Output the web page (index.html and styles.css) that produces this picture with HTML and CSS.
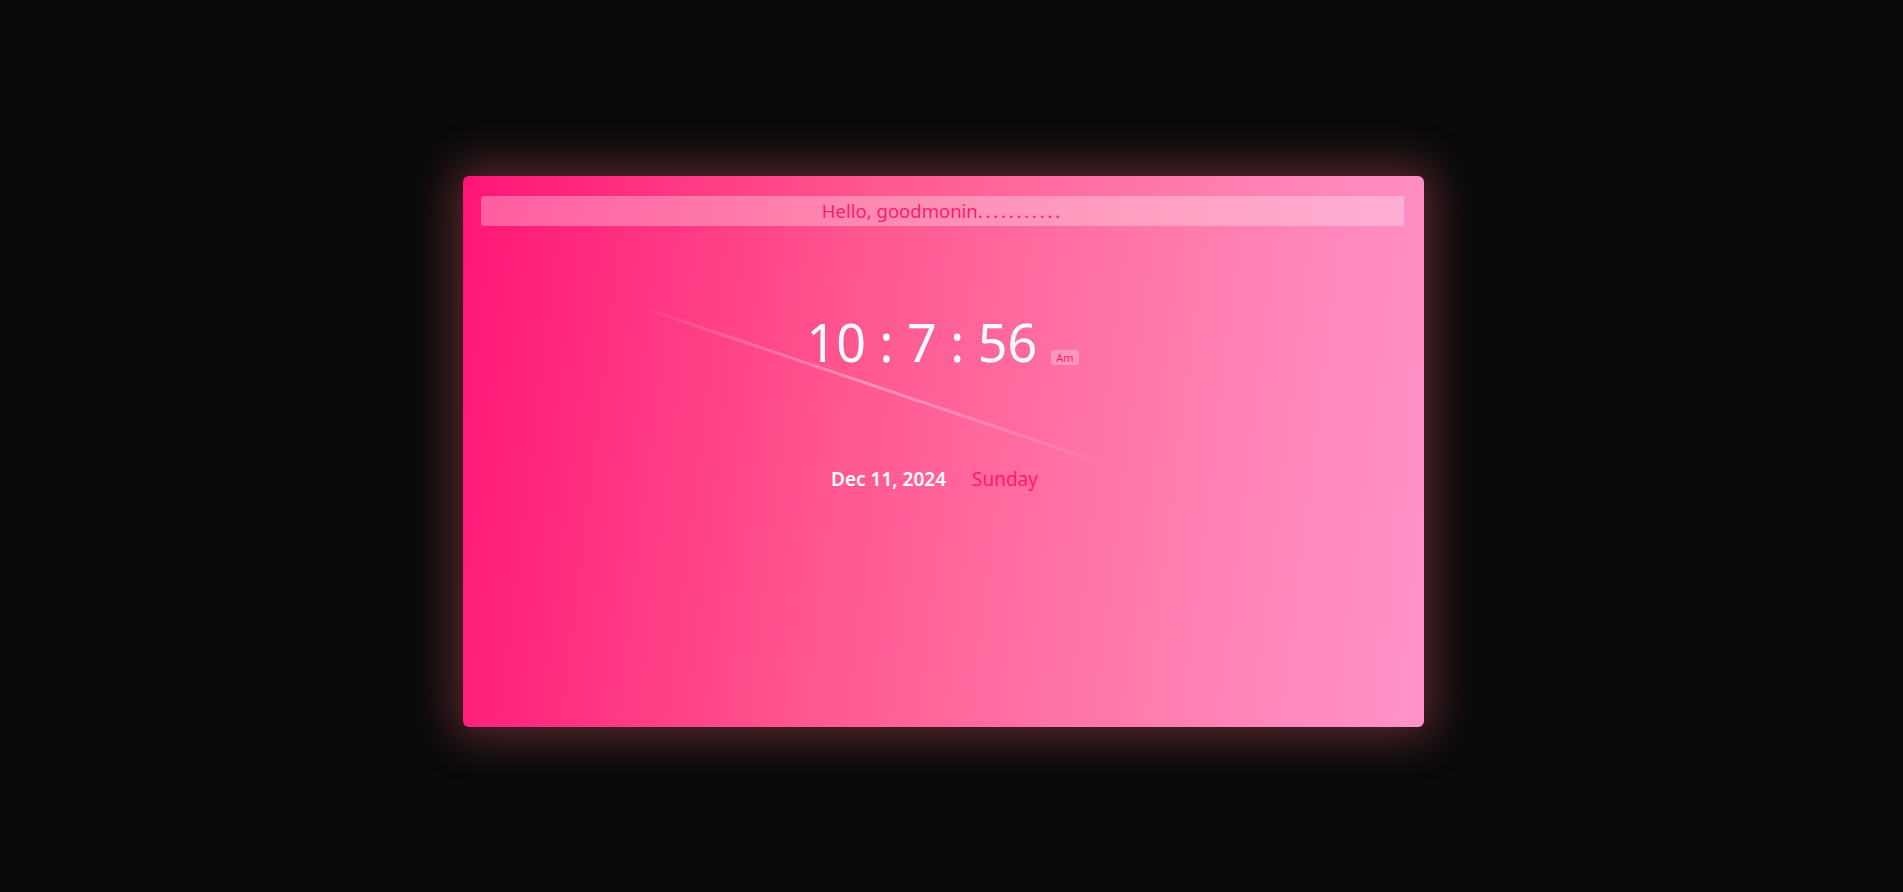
FILE: index.html
```html
<!DOCTYPE html>
<html>
<head>
<meta charset="utf-8">
<title>Clock</title>
<link rel="stylesheet" href="styles.css">
</head>
<body>
<div class="page">
  <div class="card">
    <div class="streak"></div>
    <div class="greeting">Hello, goodmonin<span class="dots">...........</span></div>
    <div class="clock">
      <span class="time">10 : 7 : 56</span>
      <span class="ampm">Am</span>
    </div>
    <div class="date-row">
      <span class="date">Dec 11, 2024</span>
      <span class="day">Sunday</span>
    </div>
  </div>
</div>
</body>
</html>
```
FILE: styles.css
```css
html, body {
  margin: 0;
  padding: 0;
  background: #0a0a0a;
  height: 100%;
}
body {
  font-family: "Noto Sans", "Open Sans", sans-serif;
}
.page {
  padding: 176px 0 0 463px;
}
.card {
  position: relative;
  width: 961px;
  height: 551px;
  box-sizing: border-box;
  padding: 20px 20px 20px 18px;
  border-radius: 6px;
  background: linear-gradient(97deg, #ff1575 0%, #ff5790 40%, #ff7aac 70%, #ff94c9 100%);
  box-shadow: 0 0 45px 8px rgba(255, 100, 120, 0.36);
  overflow: hidden;
}
.streak {
  position: absolute;
  left: 185px;
  top: 132px;
  width: 469px;
  height: 3px;
  transform-origin: 0 50%;
  transform: rotate(18.66deg);
  background: linear-gradient(90deg, rgba(255,255,255,0.05), rgba(255,255,255,0.35) 50%, rgba(255,255,255,0.05));
  border-radius: 2px;
}
.greeting {
  height: 30px;
  line-height: 30px;
  border-radius: 3px;
  background: rgba(255, 255, 255, 0.3);
  color: #ff1a6e;
  font-size: 18.5px;
  text-align: center;
  padding-right: 0;
}
.dots {
  letter-spacing: 2.8px;
}
.clock {
  display: flex;
  align-items: baseline;
  justify-content: center;
  gap: 14px;
  margin-top: 85px;
  padding-right: 0;
}
.time {
  color: #f4fbff;
  font-size: 52px;
  line-height: 62px;
}
.ampm {
  font-size: 11px;
  color: #ff1a6e;
  background: rgba(255, 255, 255, 0.28);
  border-radius: 3px;
  padding: 1px 5px;
  line-height: 13px;
}
.date-row {
  display: flex;
  justify-content: center;
  gap: 26px;
  margin-top: 93px;
  padding-right: 16px;
}
.date {
  color: #fff;
  font-weight: 600;
  font-size: 19px;
}
.day {
  color: #ff1a6e;
  font-size: 19px;
}
```
